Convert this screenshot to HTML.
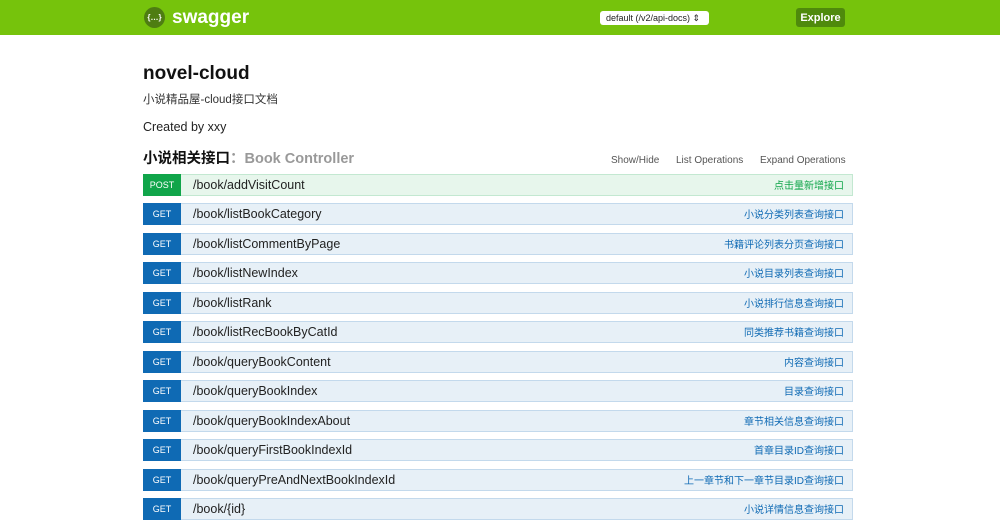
<!DOCTYPE html>
<html><head><meta charset="utf-8"><style>
*{margin:0;padding:0;box-sizing:border-box}
body{width:1000px;height:527px;overflow:hidden;background:#fff;font-family:"Liberation Sans","Noto Sans CJK SC",sans-serif;color:#000;position:relative}
div{line-height:1.15}
.hdr{position:absolute;left:0;top:0;width:1000px;height:35px;background:#76c30c}
.logo{position:absolute;left:144px;top:7px;width:21px;height:21px;border-radius:50%;background:#4e7d12;color:#fff;font-size:8px;line-height:21px !important;text-align:center;font-weight:bold}
.brand{position:absolute;left:172px;top:7px;color:#fff;font-weight:bold;font-size:19px;line-height:22px !important}
.sel{position:absolute;left:600px;top:11px;width:109px;height:14px;background:#fff;border-radius:3px;font-size:9px;line-height:14px !important;padding-left:6px;color:#222}
.exp{position:absolute;left:796px;top:8px;width:49px;height:19px;background:#4f8a0c;border-radius:3px;color:#fff;font-weight:bold;font-size:11px;line-height:20px !important;text-align:center}
.t{position:absolute;left:143px;top:63px;font-size:19px;font-weight:bold;color:#111}
.d{position:absolute;left:143px;top:94px;font-size:11.5px;color:#333}
.c{position:absolute;left:143px;top:120px;font-size:12.5px;color:#222}
.sec{position:absolute;left:143px;top:151px;font-size:14.5px;font-weight:bold;color:#111}
.sec span{color:#999}
.lk{position:absolute;top:155px;font-size:10px;color:#555}
.row{position:absolute;left:143px;width:710px;height:22px;border:1px solid #c3d9ec;background:#e7f0f7}
.row .b{position:absolute;left:-1px;top:-1px;width:38px;height:22px;background:#0f6ab4;color:#fff;font-size:9px;line-height:22px !important;text-align:center}
.row .p{position:absolute;left:49px;top:0;font-size:12.5px;line-height:20px !important;color:#222}
.row .s{position:absolute;right:8px;top:2px;font-size:10px;line-height:20px !important;color:#0f6ab4}
.row.post{background:#e7f6ec;border-color:#c3e8d1}
.row.post .b{background:#10a54a}
.row.post .s{color:#10a54a}
</style></head><body>
<div class="hdr"><div class="logo">{…}</div><div class="brand">swagger</div><div class="sel">default (/v2/api-docs) ⇕</div><div class="exp">Explore</div></div>
<div class="t">novel-cloud</div>
<div class="d">小说精品屋-cloud接口文档</div>
<div class="c">Created by xxy</div>
<div class="sec">小说相关接口<span>：Book Controller</span></div>
<div class="lk" style="left:611px">Show/Hide</div>
<div class="lk" style="left:676px">List Operations</div>
<div class="lk" style="left:760px">Expand Operations</div>
<div class="row post" style="top:174px"><div class="b">POST</div><div class="p">/book/addVisitCount</div><div class="s">点击量新增接口</div></div>
<div class="row" style="top:203px"><div class="b">GET</div><div class="p">/book/listBookCategory</div><div class="s">小说分类列表查询接口</div></div>
<div class="row" style="top:233px"><div class="b">GET</div><div class="p">/book/listCommentByPage</div><div class="s">书籍评论列表分页查询接口</div></div>
<div class="row" style="top:262px"><div class="b">GET</div><div class="p">/book/listNewIndex</div><div class="s">小说目录列表查询接口</div></div>
<div class="row" style="top:292px"><div class="b">GET</div><div class="p">/book/listRank</div><div class="s">小说排行信息查询接口</div></div>
<div class="row" style="top:321px"><div class="b">GET</div><div class="p">/book/listRecBookByCatId</div><div class="s">同类推荐书籍查询接口</div></div>
<div class="row" style="top:351px"><div class="b">GET</div><div class="p">/book/queryBookContent</div><div class="s">内容查询接口</div></div>
<div class="row" style="top:380px"><div class="b">GET</div><div class="p">/book/queryBookIndex</div><div class="s">目录查询接口</div></div>
<div class="row" style="top:410px"><div class="b">GET</div><div class="p">/book/queryBookIndexAbout</div><div class="s">章节相关信息查询接口</div></div>
<div class="row" style="top:439px"><div class="b">GET</div><div class="p">/book/queryFirstBookIndexId</div><div class="s">首章目录ID查询接口</div></div>
<div class="row" style="top:469px"><div class="b">GET</div><div class="p">/book/queryPreAndNextBookIndexId</div><div class="s">上一章节和下一章节目录ID查询接口</div></div>
<div class="row" style="top:498px"><div class="b">GET</div><div class="p">/book/{id}</div><div class="s">小说详情信息查询接口</div></div>
</body></html>
